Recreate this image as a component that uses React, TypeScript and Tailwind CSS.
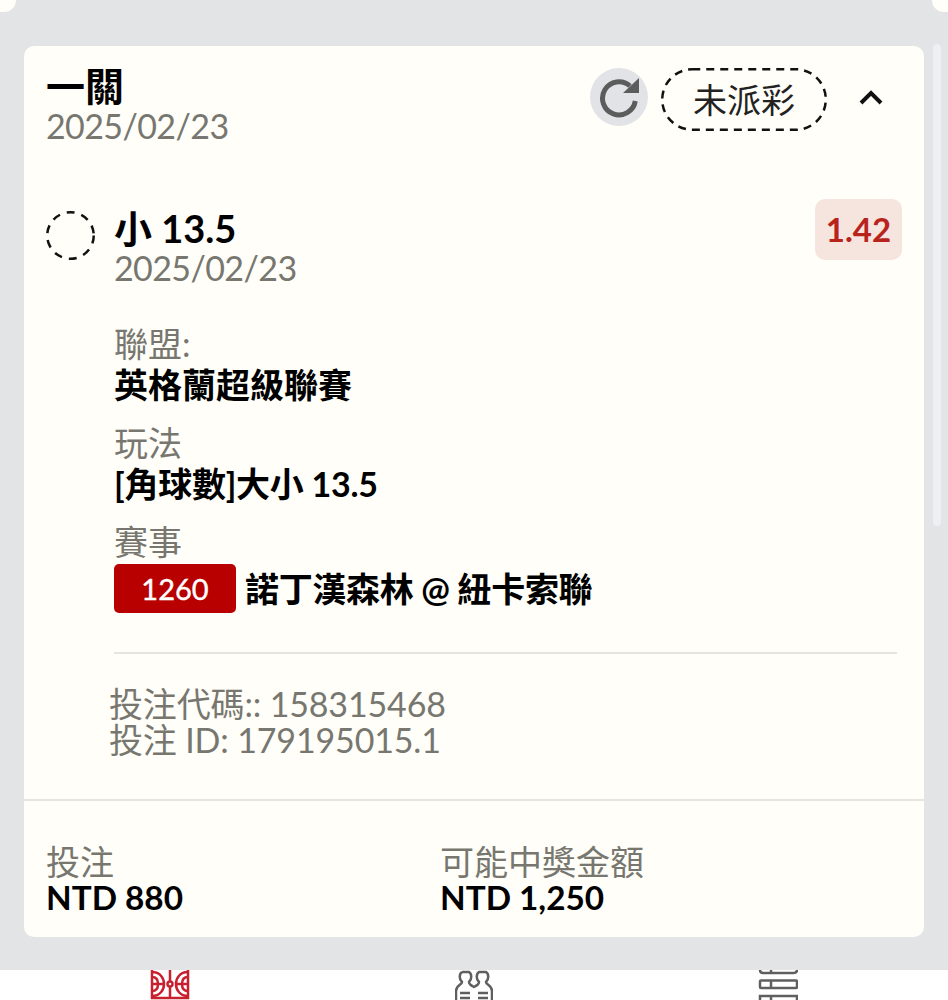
import React from 'react';

const FONT = "font-['Lato','Noto_Sans_CJK_TC',sans-serif]";

const Label = ({ children }: { children: React.ReactNode }) => (
  <div className="text-[34px] leading-[40px] text-[#777770]">{children}</div>
);

const Value = ({ children }: { children: React.ReactNode }) => (
  <div className="text-[34px] leading-[41px] font-bold text-black">{children}</div>
);

const CourtIcon = () => (
  <svg width="40" height="30" viewBox="0 0 40 30" fill="none" stroke="#c8202f" strokeWidth="2.5" className="block">
    <path d="M2 0V28H38V0" />
    <path d="M20 0V11.5M20 16.5V28" />
    <circle cx="20" cy="14" r="2.5" />
    <path d="M2 2C10 2 14 8 14 14S10 26 2 26" />
    <path d="M38 2C30 2 26 8 26 14S30 26 38 26" />
    <path d="M2 14H14M26 14H38" />
    <path d="M2 7C6 7 8 10 8 14S6 21 2 21" />
    <path d="M38 7C34 7 32 10 32 14S34 21 38 21" />
  </svg>
);

const PlayersIcon = () => (
  <svg width="38" height="30" viewBox="0 0 38 30" fill="none" stroke="#5f5f5f" strokeWidth="2.5" className="block">
    <path d="M7 2H14C17 4 17 9 14 12C14 14 17 16 19 17C21 16 24 14 24 12C21 9 21 4 24 2H31C34 4 34 9 31 12C31 15 37 15 37 21V30" />
    <path d="M7 2C4 4 4 9 7 12C7 15 1 15 1 21V30" />
    <path d="M5 23H15M5 28H15M23 23H33M23 28H33" />
  </svg>
);

const ListIcon = () => (
  <svg width="40" height="30" viewBox="0 0 40 30" fill="none" stroke="#5f5f5f" strokeWidth="2.5" className="block">
    <path d="M2 0C2 2 3 3 5 3H36C38 3 39 2 39 0" />
    <path d="M13 0V3" />
    <rect x="2" y="10.5" width="37" height="7.5" rx="1" />
    <path d="M13 10.5V18" />
    <path d="M2 30V26H39V30" />
    <path d="M13 26V30" />
  </svg>
);

export default function App() {
  return (
    <div className={`${FONT} relative w-[948px] h-[1000px] overflow-hidden bg-white flex flex-col`}>
      <div className="relative h-[970px] bg-[#e3e4e6] pt-[46px] pl-[24px]">
        {/* bottom corners of the card above */}
        <div className="absolute left-0 top-0 w-[16px] h-[12px] bg-[#fffef8] rounded-br-[12px]" />
        <div className="absolute right-0 top-0 w-[16px] h-[12px] bg-[#fffef8] rounded-bl-[12px]" />
        {/* scrollbar */}
        <div className="absolute left-[933px] top-[44px] w-[8px] h-[482px] bg-[#eeeff3] rounded-[4px]" />

        <div className="w-[900px] h-[891px] bg-[#fffef8] rounded-[10px] flex flex-col">
          <div className="flex justify-between items-start pl-[22px] pr-[39px] pt-[20px]">
            <div>
              <div className="text-[39px] leading-[40px] font-bold text-black">一關</div>
              <div className="text-[34px] leading-[40px] tracking-[-0.6px] text-[#777770]">2025/02/23</div>
            </div>
            <div className="flex items-start pt-[2px]">
              <div className="w-[58px] h-[58px] rounded-full bg-[#e1e3e6] flex items-center justify-center">
                <svg width="42" height="43" viewBox="0 0 42 43" fill="none">
                  <path d="M32 10A16.5 16.5 0 1 0 37.3 25" stroke="#5c5c5c" strokeWidth="5" />
                  <path d="M41 2V17H25Z" fill="#5c5c5c" />
                </svg>
              </div>
              <div className="relative ml-[13px] w-[166px] h-[63px] flex items-center justify-center text-[34px] text-[#222]">
                <svg width="166" height="63" className="absolute left-0 top-0">
                  <rect x="1.25" y="1.25" width="163.5" height="60.5" rx="30" fill="none" stroke="#111" strokeWidth="2.5" strokeDasharray="8 6" />
                </svg>
                未派彩
              </div>
              <svg width="28" height="20" viewBox="0 0 28 20" fill="none" className="ml-[30px] mt-[19px]">
                <path d="M4 16L14 6L24 16" stroke="#111" strokeWidth="4" />
              </svg>
            </div>
          </div>

          <div className="flex pl-[22px] pr-[22px] pt-[53px]">
            <svg width="49" height="49" className="mt-[12px] shrink-0">
              <circle cx="24.5" cy="24.5" r="23.25" fill="none" stroke="#111" strokeWidth="2.5" strokeDasharray="8 7" />
            </svg>
            <div className="ml-[19px] flex-1">
              <div className="flex justify-between items-start">
                <div className="pt-[9px]">
                  <div className="text-[38px] leading-[40px] font-bold text-black">小 13.5</div>
                  <div className="text-[34px] leading-[40px] tracking-[-0.6px] text-[#777770]">2025/02/23</div>
                </div>
                <div className="w-[87px] h-[61px] rounded-[10px] bg-[#f6e5de] flex items-center justify-center text-[33px] font-bold text-[#b8241c]">1.42</div>
              </div>
              <div className="mt-[36px] flex flex-col gap-[18px]">
                <div>
                  <Label>聯盟:</Label>
                  <Value>英格蘭超級聯賽</Value>
                </div>
                <div>
                  <Label>玩法</Label>
                  <div className="tracking-[-0.25px]"><Value>[角球數]大小 13.5</Value></div>
                </div>
                <div>
                  <Label>賽事</Label>
                  <div className="flex items-center mt-[2px]">
                    <div className="w-[122px] h-[49px] rounded-[5px] bg-[#b80000] text-white text-[29px] [-webkit-text-stroke:0.4px_white] flex items-center justify-center">1260</div>
                    <div className="ml-[9px] text-[34px] leading-[49px] tracking-[-0.33px] font-bold text-black">諾丁漢森林 @ 紐卡索聯</div>
                  </div>
                </div>
              </div>
              <div className="mt-[39px] h-[2px] bg-[#e6e4de] mr-[5px]" />
              <div className="mt-[32px] -ml-[5px] text-[34px] leading-[36px] tracking-[-0.15px] text-[#777770]">
                <div>投注代碼:: 158315468</div>
                <div>投注 ID: 179195015.1</div>
              </div>
            </div>
          </div>

          <div className="mt-[41px] h-[2px] bg-[#e6e4de]" />

          <div className="flex pl-[22px] pt-[43px]">
            <div className="w-[394px]">
              <div className="text-[34px] leading-[36px] text-[#777770]">投注</div>
              <div className="text-[33.3px] leading-[35px] font-bold text-black">NTD 880</div>
            </div>
            <div>
              <div className="text-[34px] leading-[36px] text-[#777770]">可能中獎金額</div>
              <div className="text-[33.3px] leading-[35px] font-bold text-black">NTD 1,250</div>
            </div>
          </div>
        </div>
      </div>

      <div className="flex h-[30px] bg-white">
        <div className="ml-[150px]"><CourtIcon /></div>
        <div className="ml-[265px]"><PlayersIcon /></div>
        <div className="ml-[265px]"><ListIcon /></div>
      </div>
    </div>
  );
}
